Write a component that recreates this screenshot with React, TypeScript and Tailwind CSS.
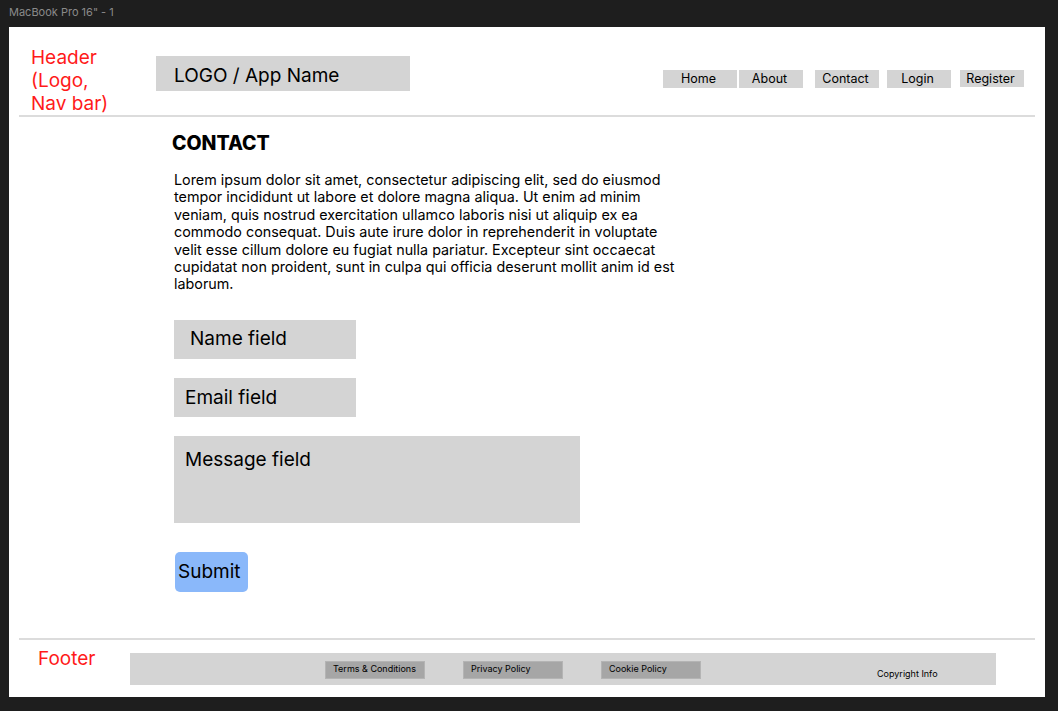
import React from "react";

const navItems = [
  { label: "Home", w: "w-[74px]", ml: "ml-0", h: "h-[18px]" },
  { label: "About", w: "w-[64px]", ml: "ml-[2px]", h: "h-[18px]" },
  { label: "Contact", w: "w-[64px]", ml: "ml-[12px]", h: "h-[18px]" },
  { label: "Login", w: "w-[64px]", ml: "ml-[8px]", h: "h-[18px]" },
  { label: "Register", w: "w-[64px]", ml: "ml-[9px]", h: "h-[17px]" },
];

const lorem = [
  "Lorem ipsum dolor sit amet, consectetur adipiscing elit, sed do eiusmod",
  "tempor incididunt ut labore et dolore magna aliqua. Ut enim ad minim",
  "veniam, quis nostrud exercitation ullamco laboris nisi ut aliquip ex ea",
  "commodo consequat. Duis aute irure dolor in reprehenderit in voluptate",
  "velit esse cillum dolore eu fugiat nulla pariatur. Excepteur sint occaecat",
  "cupidatat non proident, sunt in culpa qui officia deserunt mollit anim id est",
  "laborum.",
];

export default function App() {
  return (
    <div
      className="w-[1058px] h-[711px] bg-[#1e1e1e] flex flex-col overflow-hidden"
      style={{ fontFamily: "Inter, 'Noto Sans', sans-serif" }}
    >
      <div className="h-[27px] pl-[9px] flex items-center text-[11px] text-[#8a8a8a] leading-none pb-[2px]">
        MacBook Pro 16" - 1
      </div>
      <div className="ml-[9px] w-[1036px] h-[670px] bg-white flex flex-col">
        {/* Header */}
        <div className="h-[88px] flex items-start">
          <div className="ml-[22px] mt-[19px] w-[125px] text-[19px] leading-[23px] text-[#ff1a1a]">
            Header
            <br />
            (Logo,
            <br />
            Nav bar)
          </div>
          <div className="mt-[29px] w-[254px] h-[35px] bg-[#d4d4d4] flex items-center pl-[18px] pt-[5px] text-[19px] text-black">
            LOGO / App Name
          </div>
          <div className="ml-[253px] mt-[43px] flex items-start">
            {navItems.map((n) => (
              <div
                key={n.label}
                className={`${n.w} ${n.ml} ${n.h} bg-[#d4d4d4] flex items-center justify-center pt-[1px] pr-[3px] text-[12.5px] text-black leading-none`}
              >
                {n.label}
              </div>
            ))}
          </div>
        </div>
        <div className="mx-[10px] h-[2px] bg-[#dcdcdc]" />

        {/* Main */}
        <div className="flex-1 pl-[165px] pt-[15px]">
          <h1 className="-ml-[2px] text-[19.5px] leading-[23px] font-extrabold text-black">CONTACT</h1>
          <p className="mt-[16px] text-[14.35px] leading-[17.4px] text-black">
            {lorem.map((l, i) => (
              <React.Fragment key={i}>
                {l}
                {i < lorem.length - 1 && <br />}
              </React.Fragment>
            ))}
          </p>
          <div className="mt-[27px] w-[182px] h-[39px] bg-[#d4d4d4] flex items-center pl-[16px] text-[19px] text-black">
            Name field
          </div>
          <div className="mt-[19px] w-[182px] h-[39px] bg-[#d4d4d4] flex items-center pl-[11px] pt-[2px] text-[19px] text-black">
            Email field
          </div>
          <div className="mt-[19px] w-[406px] h-[87px] bg-[#d4d4d4] pl-[11px] pt-[12px] text-[19px] leading-[23px] text-black">
            Message field
          </div>
          <div className="mt-[29px] ml-[1px] w-[73px] h-[40px] bg-[#8ab8fa] rounded-[5px] flex items-center pl-[3px] text-[19px] text-black">
            Submit
          </div>
        </div>

        {/* Footer */}
        <div className="mx-[10px] h-[2px] bg-[#dcdcdc]" />
        <div className="h-[57px] flex items-start">
          <div className="ml-[29px] mt-[7px] w-[92px] text-[19px] leading-[23px] text-[#ff1a1a]">Footer</div>
          <div className="mt-[13px] w-[866px] h-[32px] bg-[#d4d4d4] flex items-start">
            {["Terms & Conditions", "Privacy Policy", "Cookie Policy"].map((t, i) => (
              <div
                key={t}
                className={`${i === 0 ? "ml-[195px]" : "ml-[38px]"} mt-[8px] w-[100px] h-[18px] bg-[#a6a6a6] border border-[#b4b4b4] text-[9px] leading-none text-black pl-[7px] pt-[2px]`}
              >
                {t}
              </div>
            ))}
            <div className="ml-[176px] mt-[15px] text-[9px] leading-[11px] text-black">Copyright Info</div>
          </div>
        </div>
      </div>
    </div>
  );
}
